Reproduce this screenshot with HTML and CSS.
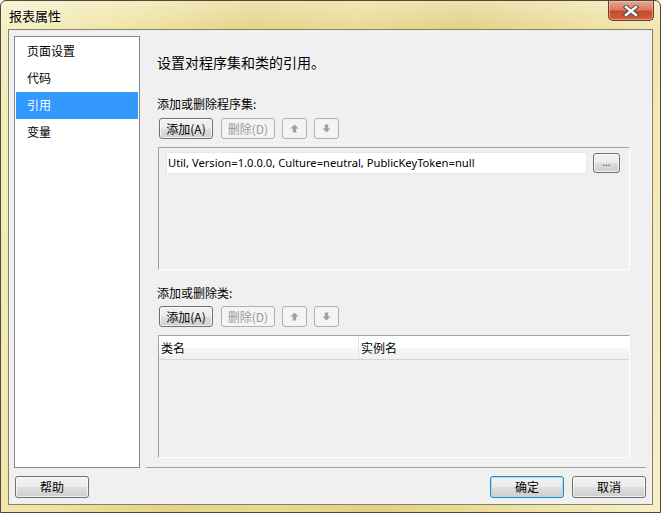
FILE: index.html
```html
<!DOCTYPE html>
<html lang="zh-CN">
<head>
<meta charset="utf-8">
<title>报表属性</title>
<link rel="stylesheet" href="styles.css">
</head>
<body>
<div class="window">
  <div class="titlebar">
    <span class="title">报表属性</span>
    <div class="close">
      <svg width="16" height="12" viewBox="0 0 16 12">
        <path d="M3 2 L13 10 M13 2 L3 10" stroke="#4a4a4a" stroke-width="4.4" stroke-linecap="square" fill="none"/>
        <path d="M3 2 L13 10 M13 2 L3 10" stroke="#ffffff" stroke-width="2.4" stroke-linecap="square" fill="none"/>
      </svg>
    </div>
  </div>
  <div class="client">
    <div class="main">
      <ul class="nav">
        <li class="nav-item">页面设置</li>
        <li class="nav-item">代码</li>
        <li class="nav-item selected">引用</li>
        <li class="nav-item">变量</li>
      </ul>
      <div class="panel">
        <div class="heading">设置对程序集和类的引用。</div>
        <div class="label label-first">添加或删除程序集:</div>
        <div class="toolbar">
          <button class="btn btn-add">添加(A)</button>
          <button class="btn btn-del disabled">删除(D)</button>
          <button class="btn btn-arrow disabled"><svg width="9" height="9" viewBox="0 0 9 9"><path d="M4.5 0.5 L8.5 4.5 H6.2 V8.5 H2.8 V4.5 H0.5 Z" fill="#a0a0a0"/></svg></button>
          <button class="btn btn-arrow disabled"><svg width="9" height="9" viewBox="0 0 9 9"><path d="M4.5 8.5 L8.5 4.5 H6.2 V0.5 H2.8 V4.5 H0.5 Z" fill="#a0a0a0"/></svg></button>
        </div>
        <div class="box">
          <div class="asm-row">
            <div class="field">Util, Version=1.0.0.0, Culture=neutral, PublicKeyToken=null</div>
            <button class="btn btn-dots">...</button>
          </div>
        </div>
        <div class="label label-second">添加或删除类:</div>
        <div class="toolbar toolbar-second">
          <button class="btn btn-add">添加(A)</button>
          <button class="btn btn-del disabled">删除(D)</button>
          <button class="btn btn-arrow disabled"><svg width="9" height="9" viewBox="0 0 9 9"><path d="M4.5 0.5 L8.5 4.5 H6.2 V8.5 H2.8 V4.5 H0.5 Z" fill="#a0a0a0"/></svg></button>
          <button class="btn btn-arrow disabled"><svg width="9" height="9" viewBox="0 0 9 9"><path d="M4.5 8.5 L8.5 4.5 H6.2 V0.5 H2.8 V4.5 H0.5 Z" fill="#a0a0a0"/></svg></button>
        </div>
        <div class="box table">
          <div class="thead">
            <div class="th th-class">类名</div>
            <div class="th th-inst">实例名</div>
          </div>
        </div>
      </div>
    </div>
    <div class="footer">
      <button class="btn btn-foot">帮助</button>
      <span class="spacer"></span>
      <button class="btn btn-foot default">确定</button>
      <button class="btn btn-foot btn-cancel">取消</button>
    </div>
  </div>
</div>
</body>
</html>
```

FILE: styles.css
```css
* { box-sizing: border-box; }
html, body { margin: 0; padding: 0; }
body {
  width: 661px;
  height: 513px;
  overflow: hidden;
  font-family: "Noto Sans CJK SC", "Noto Sans", sans-serif;
  font-size: 12px;
  color: #000;
}
.window {
  width: 661px;
  height: 513px;
  border: 1px solid #4f4a36;
  border-radius: 6px 6px 0 0;
  padding: 0 7px 7px 7px;
  background:
    linear-gradient(to bottom, rgba(255,255,255,0.35), rgba(255,255,255,0) 30px),
    linear-gradient(100deg, #f4efc4 0%, #efe3a2 18%, #e4d386 34%, #e9da92 48%, #e2d083 62%, #eee0a0 80%, #f6f0c8 100%);
  display: flex;
  flex-direction: column;
}
.titlebar {
  height: 28px;
  position: relative;
  display: flex;
  align-items: center;
  padding-left: 1px;
  padding-top: 1px;
}
.title {
  font-size: 13px;
  line-height: 16px;
  color: #000;
  text-shadow: 0 0 6px rgba(255,255,240,0.9);
}
.close {
  position: absolute;
  top: 0;
  right: -1px;
  width: 46px;
  height: 20px;
  border: 1px solid #6b3a2c;
  border-top: none;
  border-radius: 0 0 5px 5px;
  background: linear-gradient(to bottom, #e8a893 0%, #d97a60 45%, #c74a2a 55%, #d0603e 100%);
  box-shadow: inset 0 0 0 1px rgba(255,210,190,0.5);
  display: flex;
  align-items: center;
  justify-content: center;
}
.client {
  width: 645px;
  height: 476px;
  border: 1px solid #858066;
  background: #f0f0f0;
  display: flex;
  flex-direction: column;
}
.main {
  display: flex;
  padding: 6px 0 0 5px;
  height: 438px;
}
.nav {
  list-style: none;
  margin: 0;
  padding: 1px;
  width: 126px;
  height: 432px;
  background: #fff;
  border: 1px solid #828790;
}
.nav-item {
  height: 27px;
  line-height: 26px;
  padding-left: 11px;
  font-size: 12px;
}
.nav-item.selected {
  background: #3399ff;
  color: #fff;
}
.panel {
  margin-left: 6px;
  width: 500px;
  height: 432px;
  border-bottom: 1px solid #a0a0a0;
  padding-left: 11px;
  display: flex;
  flex-direction: column;
}
.heading {
  margin-top: 16px;
  font-size: 14px;
  line-height: 20px;
}
.label {
  font-size: 12px;
  line-height: 16px;
}
.label-first { margin-top: 24px; }
.label-second { margin-top: 15px; }
.toolbar {
  display: flex;
  margin-top: 6px;
  margin-left: 2px;
  height: 21px;
}
.toolbar-second { margin-top: 5px; }
.btn {
  font-family: "Noto Sans CJK SC", "Noto Sans", sans-serif;
  font-size: 12px;
  color: #000;
  border: 1px solid #707070;
  border-radius: 3px;
  background: linear-gradient(to bottom, #f2f2f2 0%, #ebebeb 50%, #dddddd 51%, #cfcfcf 100%);
  box-shadow: inset 0 0 0 1px rgba(255,255,255,0.7);
  padding: 0;
  display: flex;
  align-items: center;
  justify-content: center;
  line-height: 1;
}
.btn.disabled {
  border-color: #adb2b5;
  background: #f4f4f4;
  color: #9a9a9a;
  box-shadow: none;
}
.btn-add { width: 54px; height: 21px; }
.btn-del { width: 54px; height: 21px; margin-left: 8px; }
.btn-arrow { width: 25px; height: 21px; margin-left: 7px; }
.box {
  margin-top: 8px;
  margin-left: 1px;
  width: 472px;
  height: 123px;
  border-top: 1px solid #a0a0a0;
  border-left: 1px solid #a0a0a0;
  border-right: 1px solid #ffffff;
  border-bottom: 1px solid #ffffff;
  background: #f0f0f0;
}
.asm-row {
  display: flex;
  padding: 4px 0 0 7px;
  align-items: flex-start;
}
.field {
  width: 421px;
  height: 22px;
  background: #fff;
  border: 1px solid #e6e6e6;
  font-family: "Noto Sans", sans-serif;
  font-size: 11.2px;
  line-height: 19px;
  padding-left: 1px;
  white-space: nowrap;
  overflow: hidden;
}
.btn-dots {
  width: 27px;
  height: 20px;
  margin-left: 6px;
  margin-top: 1px;
  font-family: "Noto Sans", sans-serif;
  font-size: 10px;
  padding-bottom: 3px;
  color: #4a3a6a;
}
.table { margin-top: 8px; }
.thead {
  display: flex;
  height: 24px;
  background: linear-gradient(to bottom, #ffffff 0%, #ffffff 50%, #f6f7f8 51%, #eef0f2 100%);
  border-bottom: 1px solid #d5d5d5;
}
.th {
  line-height: 23px;
  font-size: 12px;
  padding-left: 2px;
}
.th-class {
  width: 200px;
  border-right: 1px solid #e2e3e5;
}
.th-inst { flex: 1; }
.footer {
  display: flex;
  padding: 8px 6px 0 6px;
}
.spacer { flex: 1; }
.btn-foot {
  width: 74px;
  height: 22px;
}
.btn-cancel { margin-left: 8px; }
.btn.default {
  border-color: #3c7fb1;
  box-shadow: inset 0 0 0 1px #9fe2fc;
}
```
